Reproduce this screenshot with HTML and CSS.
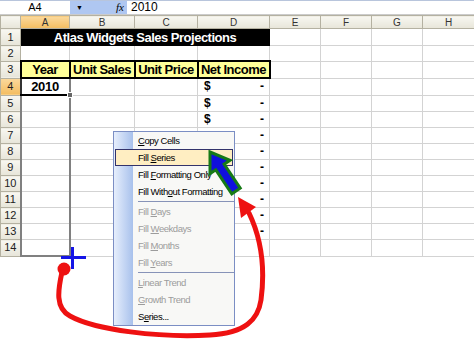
FILE: index.html
```html
<!DOCTYPE html>
<html lang="en">
<head>
  <meta charset="UTF-8" />
  <title>Atlas Widgets Sales Projections</title>
  <link rel="stylesheet" href="styles.css">
</head>
<body>
  <div class="page">
    <div class="formula-bar">
      <div class="name-box">A4</div>
      <div class="name-tools"><span class="drop">&#9660;</span><span class="fx"><i>f</i>x</span></div>
      <div class="formula">2010</div>
    </div>

    <table class="sheet">
      <colgroup>
        <col class="w-hdr"><col class="w-a"><col class="w-b"><col class="w-c"><col class="w-d">
        <col class="w-e"><col class="w-f"><col class="w-g"><col class="w-h">
      </colgroup>
      <tr class="r-head">
        <th></th><th class="hl">A</th><th>B</th><th>C</th><th>D</th><th>E</th><th>F</th><th>G</th><th>H</th>
      </tr>
      <tr class="r1">
        <th>1</th><td colspan="4" class="banner">Atlas Widgets Sales Projections</td><td></td><td></td><td></td><td></td>
      </tr>
      <tr class="r2">
        <th>2</th><td></td><td></td><td></td><td></td><td></td><td></td><td></td><td></td>
      </tr>
      <tr class="r3">
        <th>3</th><td class="label">Year</td><td class="label">Unit Sales</td><td class="label">Unit Price</td><td class="label">Net Income</td><td></td><td></td><td></td><td></td>
      </tr>
      <tr class="r4">
        <th class="hl">4</th><td class="active">2010<span class="handle"></span></td><td></td><td></td><td class="money"><span class="cur">$</span><span class="dash">-</span></td><td></td><td></td><td></td><td></td>
      </tr>
      <tr class="row">
        <th>5</th><td class="range"></td><td></td><td></td><td class="money"><span class="cur">$</span><span class="dash">-</span></td><td></td><td></td><td></td><td></td>
      </tr>
      <tr class="row">
        <th>6</th><td class="range"></td><td></td><td></td><td class="money"><span class="cur">$</span><span class="dash">-</span></td><td></td><td></td><td></td><td></td>
      </tr>
      <tr class="row">
        <th>7</th><td class="range"></td><td></td><td></td><td class="money"><span class="dash">-</span></td><td></td><td></td><td></td><td></td>
      </tr>
      <tr class="row">
        <th>8</th><td class="range"></td><td></td><td></td><td class="money"><span class="dash">-</span></td><td></td><td></td><td></td><td></td>
      </tr>
      <tr class="row">
        <th>9</th><td class="range"></td><td></td><td></td><td class="money"><span class="dash">-</span></td><td></td><td></td><td></td><td></td>
      </tr>
      <tr class="row">
        <th>10</th><td class="range"></td><td></td><td></td><td class="money"><span class="dash">-</span></td><td></td><td></td><td></td><td></td>
      </tr>
      <tr class="row">
        <th>11</th><td class="range"></td><td></td><td></td><td class="money"><span class="dash">-</span></td><td></td><td></td><td></td><td></td>
      </tr>
      <tr class="row">
        <th>12</th><td class="range"></td><td></td><td></td><td class="money"><span class="dash">-</span></td><td></td><td></td><td></td><td></td>
      </tr>
      <tr class="row">
        <th>13</th><td class="range"></td><td></td><td></td><td class="money"><span class="dash">-</span></td><td></td><td></td><td></td><td></td>
      </tr>
      <tr class="row">
        <th>14</th><td class="range range-end"></td><td></td><td></td><td></td><td></td><td></td><td></td><td></td>
      </tr>
    </table>

    <ul class="menu">
      <li><u>C</u>opy Cells</li>
      <li class="on">Fill <u>S</u>eries</li>
      <li>Fill <u>F</u>ormatting Only</li>
      <li>Fill With<u>o</u>ut Formatting</li>
      <li class="sep"></li>
      <li class="off">Fill <u>D</u>ays</li>
      <li class="off">Fill <u>W</u>eekdays</li>
      <li class="off">Fill <u>M</u>onths</li>
      <li class="off">Fill <u>Y</u>ears</li>
      <li class="sep"></li>
      <li class="off"><u>L</u>inear Trend</li>
      <li class="off"><u>G</u>rowth Trend</li>
      <li>S<u>e</u>ries...</li>
    </ul>

    <svg class="marks" width="474" height="339" viewBox="0 0 474 339">
      <!-- fill handle cross -->
      <path d="M61 257.5 H86 M72.5 247 V269" stroke="#1515e6" stroke-width="3" fill="none"/>
      <!-- red drag path -->
      <circle cx="64" cy="269" r="6.5" fill="#ee1111"/>
      <path d="M62 272 C58 290, 55 308, 70 316 C95 330, 160 338, 210 335 C245 333, 258 320, 261 300 C265 270, 262 240, 249 213"
            stroke="#ee1111" stroke-width="5" fill="none" stroke-linecap="round"/>
      <polygon points="238,197 256,207 241,218" fill="#ee1111"/>
      <!-- green/blue pointer arrow -->
      <polygon points="210,152 230,160.3 224.1,164.2 240.2,188.2 231.8,193.8 215.8,169.8 210,173.6"
               fill="#1010dd" stroke="#167a16" stroke-width="3" stroke-linejoin="miter"/>
    </svg>
  </div>
</body>
</html>
```

FILE: styles.css
```css
body {
  margin: 0;
  background: #fff;
}

.page {
  position: relative;
  width: 474px;
  height: 339px;
  overflow: hidden;
  background: #fff;
  font-family: "Liberation Sans", Arial, sans-serif;
  color: #000;
}

/* formula bar */
.formula-bar {
  display: flex;
  height: 13px;
  border-top: 1px solid #b8c5dc;
  border-bottom: 1px solid #cbcbcb;
  font-size: 11px;
  line-height: 13px;
}

.name-box {
  width: 70px;
  text-align: center;
}

.name-tools {
  width: 57px;
  box-sizing: border-box;
  display: flex;
  align-items: center;
  justify-content: space-between;
  padding: 0 3px 0 6px;
  background: #afc7f1;
}

.drop {
  font-size: 7px;
}

.fx {
  font-family: "Liberation Serif", serif;
  font-style: italic;
  font-size: 11px;
}

.formula {
  padding-left: 4px;
  font-size: 12px;
}

/* grid */
.sheet {
  border-collapse: collapse;
  table-layout: fixed;
  width: 474px;
}

.w-hdr { width: 20px; }
.w-a { width: 49px; }
.w-b { width: 65px; }
.w-c { width: 63px; }
.w-d { width: 72px; }
.w-e, .w-f, .w-g { width: 51px; }
.w-h { width: 52px; }

.sheet th,
.sheet td {
  padding: 0;
  border: 1px solid #d3d3d3;
  white-space: nowrap;
  overflow: hidden;
  font-size: 13px;
  line-height: 13px;
}

.sheet th {
  font-weight: normal;
  font-size: 11px;
  color: #222;
  background: linear-gradient(#f8f7f1, #e7e5d9);
  border-color: #b4b1a1;
}

.r-head th {
  height: 12px;
  font-size: 10px;
  line-height: 11px;
  color: #333;
}

.sheet th.hl {
  background: linear-gradient(#fbd99d, #f4bd60);
}

.r1 td, .r1 th { height: 16px; }
.r2 td, .r2 th { height: 14px; }
.r3 td, .r3 th { height: 15px; }
.r4 td, .r4 th { height: 15px; }
.row td, .row th { height: 15px; }

.banner {
  background: #000;
  color: #fff;
  font-weight: bold;
  text-align: center;
  letter-spacing: -0.5px;
  border-color: #000 !important;
}

.label {
  background: #ffff99;
  border: 2px solid #000 !important;
  font-weight: bold;
  text-align: center;
  letter-spacing: -0.5px;
}

.active {
  position: relative;
  overflow: visible !important;
  font-weight: bold;
  text-align: center;
  letter-spacing: -0.3px;
  border-left: 2px solid #333 !important;
  border-bottom: 2px solid #000 !important;
  border-right: 2px solid #808080 !important;
}

.handle {
  position: absolute;
  right: -4px;
  bottom: -4px;
  width: 4px;
  height: 4px;
  background: #666;
  border: 1px solid #fff;
}

.range {
  border-left: 2px solid #808080 !important;
  border-right: 2px solid #808080 !important;
}

.range-end {
  border-bottom: 2px solid #808080 !important;
}

.money {
  font-weight: bold;
  font-size: 12px !important;
  padding: 0 5px 0 6px !important;
}

.cur { float: left; }
.dash { float: right; }

/* context menu */
.menu {
  position: absolute;
  left: 113px;
  top: 131px;
  width: 120px;
  margin: 0;
  padding: 0;
  list-style: none;
  border: 1px solid #7b8ec4;
  background: linear-gradient(to right, #e6eefc 0, #a8c1ec 19px, #f8f8f6 19px);
  font-size: 9.5px;
  letter-spacing: -0.45px;
}

.menu li {
  height: 15px;
  line-height: 15px;
  margin: 0 1px;
  padding-left: 22px;
  border: 1px solid transparent;
}

.menu li.on {
  background: #ffeec2;
  border-color: #33336b;
}

.menu li.off {
  color: #9c9c9c;
}

.menu li.sep {
  height: 1px;
  margin: 1px 0 1px 24px;
  padding: 0;
  border: 0;
  background: #8793b8;
}

.marks {
  position: absolute;
  left: 0;
  top: 0;
  pointer-events: none;
}
```
